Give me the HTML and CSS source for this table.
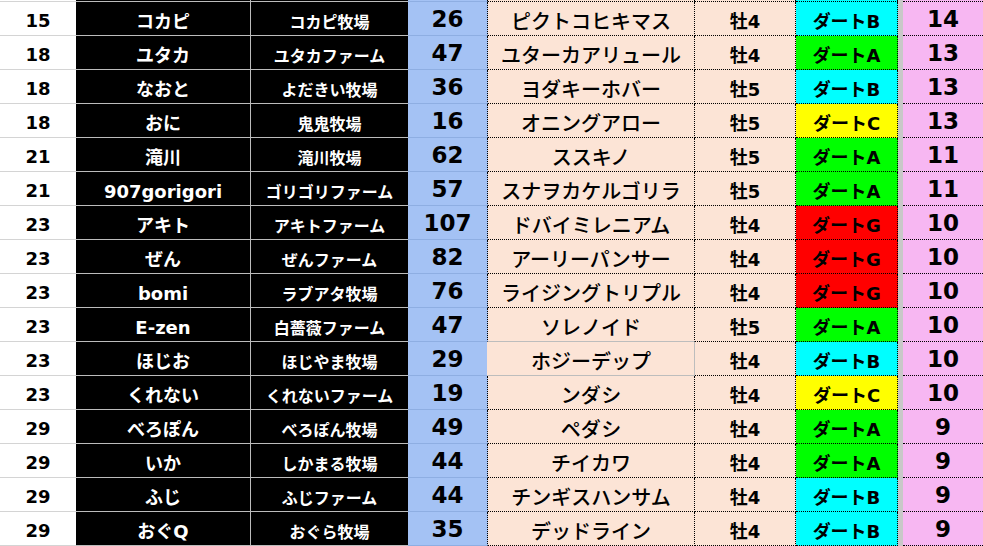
FILE: index.html
```html
<!DOCTYPE html>
<html lang="ja">
<head>
<meta charset="utf-8">
<link rel="stylesheet" href="styles.css">
</head>
<body>
<div class="sheet">
  <div class="row stub"><div class="c rank"></div><div class="c name"></div><div class="c farm"></div><div class="c num"></div><div class="c horse"></div><div class="c sex"></div><div class="c grade b"></div><div class="c gap"></div><div class="c pts"></div></div>
  <div class="row"><div class="c rank">15</div><div class="c name">コカピ</div><div class="c farm">コカピ牧場</div><div class="c num">26</div><div class="c horse">ピクトコヒキマス</div><div class="c sex">牡4</div><div class="c grade b">ダートB</div><div class="c gap"></div><div class="c pts">14</div></div>
  <div class="row"><div class="c rank">18</div><div class="c name">ユタカ</div><div class="c farm">ユタカファーム</div><div class="c num">47</div><div class="c horse">ユターカアリュール</div><div class="c sex">牡4</div><div class="c grade a">ダートA</div><div class="c gap"></div><div class="c pts">13</div></div>
  <div class="row"><div class="c rank">18</div><div class="c name">なおと</div><div class="c farm">よだきい牧場</div><div class="c num">36</div><div class="c horse">ヨダキーホバー</div><div class="c sex">牡5</div><div class="c grade b">ダートB</div><div class="c gap"></div><div class="c pts">13</div></div>
  <div class="row"><div class="c rank">18</div><div class="c name">おに</div><div class="c farm">鬼鬼牧場</div><div class="c num">16</div><div class="c horse">オニングアロー</div><div class="c sex">牡5</div><div class="c grade cc">ダートC</div><div class="c gap"></div><div class="c pts">13</div></div>
  <div class="row"><div class="c rank">21</div><div class="c name">滝川</div><div class="c farm">滝川牧場</div><div class="c num">62</div><div class="c horse">ススキノ</div><div class="c sex">牡5</div><div class="c grade a">ダートA</div><div class="c gap"></div><div class="c pts">11</div></div>
  <div class="row"><div class="c rank">21</div><div class="c name">907gorigori</div><div class="c farm">ゴリゴリファーム</div><div class="c num">57</div><div class="c horse">スナヲカケルゴリラ</div><div class="c sex">牡5</div><div class="c grade a">ダートA</div><div class="c gap"></div><div class="c pts">11</div></div>
  <div class="row"><div class="c rank">23</div><div class="c name">アキト</div><div class="c farm">アキトファーム</div><div class="c num">107</div><div class="c horse">ドバイミレニアム</div><div class="c sex">牡4</div><div class="c grade g">ダートG</div><div class="c gap"></div><div class="c pts">10</div></div>
  <div class="row"><div class="c rank">23</div><div class="c name">ぜん</div><div class="c farm">ぜんファーム</div><div class="c num">82</div><div class="c horse">アーリーパンサー</div><div class="c sex">牡4</div><div class="c grade g">ダートG</div><div class="c gap"></div><div class="c pts">10</div></div>
  <div class="row"><div class="c rank">23</div><div class="c name">bomi</div><div class="c farm">ラブアタ牧場</div><div class="c num">76</div><div class="c horse">ライジングトリプル</div><div class="c sex">牡4</div><div class="c grade g">ダートG</div><div class="c gap"></div><div class="c pts">10</div></div>
  <div class="row"><div class="c rank">23</div><div class="c name">E-zen</div><div class="c farm">白薔薇ファーム</div><div class="c num">47</div><div class="c horse solid-b">ソレノイド</div><div class="c sex">牡5</div><div class="c grade a">ダートA</div><div class="c gap"></div><div class="c pts">10</div></div>
  <div class="row"><div class="c rank">23</div><div class="c name">ほじお</div><div class="c farm">ほじやま牧場</div><div class="c num plain">29</div><div class="c horse solid">ホジーデップ</div><div class="c sex">牡4</div><div class="c grade b">ダートB</div><div class="c gap"></div><div class="c pts">10</div></div>
  <div class="row"><div class="c rank">23</div><div class="c name">くれない</div><div class="c farm">くれないファーム</div><div class="c num">19</div><div class="c horse">ンダシ</div><div class="c sex">牡4</div><div class="c grade cc">ダートC</div><div class="c gap"></div><div class="c pts">10</div></div>
  <div class="row"><div class="c rank">29</div><div class="c name">べろぽん</div><div class="c farm">べろぽん牧場</div><div class="c num">49</div><div class="c horse">ペダシ</div><div class="c sex">牡4</div><div class="c grade a">ダートA</div><div class="c gap"></div><div class="c pts">9</div></div>
  <div class="row"><div class="c rank">29</div><div class="c name">いか</div><div class="c farm">しかまる牧場</div><div class="c num">44</div><div class="c horse">チイカワ</div><div class="c sex">牡4</div><div class="c grade a">ダートA</div><div class="c gap"></div><div class="c pts">9</div></div>
  <div class="row"><div class="c rank">29</div><div class="c name">ふじ</div><div class="c farm">ふじファーム</div><div class="c num">44</div><div class="c horse">チンギスハンサム</div><div class="c sex">牡4</div><div class="c grade b">ダートB</div><div class="c gap"></div><div class="c pts">9</div></div>
  <div class="row"><div class="c rank">29</div><div class="c name">おぐQ</div><div class="c farm">おぐら牧場</div><div class="c num">35</div><div class="c horse">デッドライン</div><div class="c sex">牡4</div><div class="c grade b">ダートB</div><div class="c gap"></div><div class="c pts">9</div></div>
</div>
</body>
</html>
```
FILE: styles.css
```css
html, body {
  margin: 0;
  padding: 0;
  background: #ffffff;
  overflow: hidden;
}
.sheet {
  width: 983px;
  font-family: "DejaVu Sans", "Noto Sans CJK JP", sans-serif;
  font-weight: 700;
  color: #000;
}
.row {
  display: grid;
  grid-template-columns: 76px 175px 157px 80px 207px 101px 102px 5px 80px;
  height: 34px;
}
.row.stub {
  height: 2px;
}
.c {
  box-sizing: border-box;
  display: flex;
  align-items: center;
  justify-content: center;
  white-space: nowrap;
  overflow: hidden;
  line-height: 1;
  padding-top: 3px;
}
.stub .c {
  padding-top: 0;
}
.rank {
  background: #ffffff;
  border-bottom: 1px solid #d4d4d4;
  font-size: 18px;
  padding-top: 5px;
}
.name {
  background: #000;
  color: #fff;
  border-bottom: 1px solid #bcbcbc;
  border-right: 1px solid #bcbcbc;
  font-size: 18px;
  padding-top: 7px;
}
.farm {
  background: #000;
  color: #fff;
  border-bottom: 1px solid #bcbcbc;
  font-size: 16px;
  padding-top: 8px;
}
.num {
  background: #a4c2f4;
  border-bottom: 1px solid #8eaee2;
  border-right: 1px dotted #000;
  font-size: 23px;
  padding-top: 2px;
}
.num.plain {
  border-right: 1px solid #fce4d6;
}
.horse {
  background: #fce4d6;
  border-bottom: 1px dotted #000;
  border-right: 1px dotted #000;
  font-size: 20px;
  font-weight: 500;
  padding-top: 7px;
}
.horse.solid-b {
  border-bottom: 1px solid #bdbdbd;
}
.horse.solid {
  border-bottom: 1px solid #bdbdbd;
  border-right: 1px solid #bdbdbd;
}
.sex {
  background: #fce4d6;
  border-bottom: 1px dotted #000;
  border-right: 1px dotted #000;
  font-size: 18px;
  padding-top: 6px;
}
.grade {
  border-bottom: 1px dotted #000;
  border-right: 1px dotted #000;
  font-size: 18px;
  padding-top: 6px;
}
.grade.a { background: #00ff00; }
.grade.b { background: #00ffff; }
.grade.cc { background: #ffff00; }
.grade.g { background: #ff0000; }
.gap {
  background: #c8c8c8;
}
.pts {
  background: #f7b7f2;
  border-bottom: 1px dotted #000;
  font-size: 23px;
  padding-top: 2px;
}
```
